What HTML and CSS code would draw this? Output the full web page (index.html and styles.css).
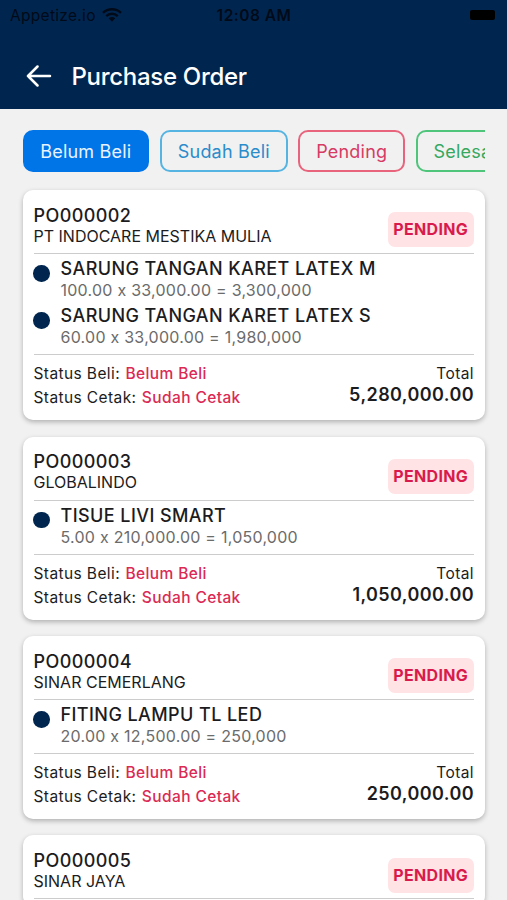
FILE: index.html
```html
<!DOCTYPE html>
<html lang="id">
  <head>
    <meta charset="UTF-8" />
    <meta name="viewport" content="width=device-width, initial-scale=1.0" />
    <title>Purchase Order</title>
    <link rel="stylesheet" href="styles.css">
  </head>
  <body>
    <header>
      <div class="status-bar">
        <div class="carrier">
          <span>Appetize.io</span>
          <svg class="wifi" viewBox="0 0 20 14">
            <path d="M1 4.9 C6 0.1 14 0.1 19 4.9" />
            <path d="M4.2 8.1 C7.6 4.9 12.4 4.9 15.8 8.1" />
            <path class="fill" d="M6.7 10.3 C8.7 8.5 11.3 8.5 13.3 10.3 L10 13.7 Z" />
          </svg>
        </div>
        <span class="time">12:08 AM</span>
        <div class="battery-box"><div class="battery"></div></div>
      </div>
      <div class="nav">
        <svg class="back" viewBox="0 0 26 22">
          <path d="M24 11 H2 M11.5 1.5 L2 11 L11.5 20.5" />
        </svg>
        <h1>Purchase Order</h1>
      </div>
    </header>

    <main>
      <div class="tabs">
        <button type="button" class="tab active">Belum Beli</button>
        <button type="button" class="tab blue">Sudah Beli</button>
        <button type="button" class="tab red">Pending</button>
        <button type="button" class="tab green">Selesai</button>
      </div>

      <div class="card">
        <div class="card-head">
          <div>
            <h2>PO000002</h2>
            <p class="vendor">PT INDOCARE MESTIKA MULIA</p>
          </div>
          <span class="badge">PENDING</span>
        </div>
        <div class="items">
          <div class="item">
            <span class="dot"></span>
            <div>
              <p class="name">SARUNG TANGAN KARET LATEX M</p>
              <p class="detail">100.00 x 33,000.00 = 3,300,000</p>
            </div>
          </div>
          <div class="item">
            <span class="dot"></span>
            <div>
              <p class="name">SARUNG TANGAN KARET LATEX S</p>
              <p class="detail">60.00 x 33,000.00 = 1,980,000</p>
            </div>
          </div>
        </div>
        <div class="card-foot">
          <div class="status">
            <p>Status Beli: <b>Belum Beli</b></p>
            <p>Status Cetak: <b>Sudah Cetak</b></p>
          </div>
          <div class="total">
            <p>Total</p>
            <p class="amount">5,280,000.00</p>
          </div>
        </div>
      </div>

      <div class="card">
        <div class="card-head">
          <div>
            <h2>PO000003</h2>
            <p class="vendor">GLOBALINDO</p>
          </div>
          <span class="badge">PENDING</span>
        </div>
        <div class="items">
          <div class="item">
            <span class="dot"></span>
            <div>
              <p class="name">TISUE LIVI SMART</p>
              <p class="detail">5.00 x 210,000.00 = 1,050,000</p>
            </div>
          </div>
        </div>
        <div class="card-foot">
          <div class="status">
            <p>Status Beli: <b>Belum Beli</b></p>
            <p>Status Cetak: <b>Sudah Cetak</b></p>
          </div>
          <div class="total">
            <p>Total</p>
            <p class="amount">1,050,000.00</p>
          </div>
        </div>
      </div>

      <div class="card">
        <div class="card-head">
          <div>
            <h2>PO000004</h2>
            <p class="vendor">SINAR CEMERLANG</p>
          </div>
          <span class="badge">PENDING</span>
        </div>
        <div class="items">
          <div class="item">
            <span class="dot"></span>
            <div>
              <p class="name">FITING LAMPU TL LED</p>
              <p class="detail">20.00 x 12,500.00 = 250,000</p>
            </div>
          </div>
        </div>
        <div class="card-foot">
          <div class="status">
            <p>Status Beli: <b>Belum Beli</b></p>
            <p>Status Cetak: <b>Sudah Cetak</b></p>
          </div>
          <div class="total">
            <p>Total</p>
            <p class="amount">250,000.00</p>
          </div>
        </div>
      </div>

      <div class="card">
        <div class="card-head">
          <div>
            <h2>PO000005</h2>
            <p class="vendor">SINAR JAYA</p>
          </div>
          <span class="badge">PENDING</span>
        </div>
        <div class="items"></div>
      </div>
    </main>
  </body>
</html>
```
FILE: styles.css
```css
* {
  box-sizing: border-box;
  margin: 0;
  padding: 0;
}

body {
  height: 900px;
  overflow: hidden;
  background: #f1f1f1;
  color: #1c1c1e;
  font-family: Inter, 'Liberation Sans', sans-serif;
  font-feature-settings: 'calt' 0;
}

header {
  height: 108.5px;
  background: #00264f;
}

.status-bar {
  display: grid;
  grid-template-columns: 1fr auto 1fr;
  align-items: center;
  height: 30px;
  padding: 0 12px 0 10px;
  font-size: 15.5px;
  color: #000a18;
}

.carrier {
  display: flex;
  align-items: center;
  gap: 6px;
  letter-spacing: 0.3px;
}

.wifi {
  width: 20px;
  height: 14px;
  fill: none;
  stroke: #000a18;
  stroke-width: 2.4;
}

.wifi .fill {
  fill: #000a18;
  stroke: none;
}

.time {
  padding-left: 3px;
  font-weight: 600;
  letter-spacing: 0.5px;
}

.battery-box {
  display: flex;
  justify-content: flex-end;
}

.battery {
  width: 25px;
  height: 10px;
  border-radius: 2px;
  background: #000;
}

.nav {
  display: flex;
  align-items: center;
  gap: 20px;
  height: 78px;
  padding: 14px 26px 0 25.5px;
}

.back {
  width: 26px;
  height: 22px;
  fill: none;
  stroke: #fff;
  stroke-width: 2.5;
  stroke-linecap: round;
  stroke-linejoin: round;
}

h1 {
  font-size: 24px;
  font-weight: 500;
  letter-spacing: -0.3px;
  color: #fff;
}

main {
  padding: 21.7px 22px 0 22.5px;
}

.tabs {
  display: flex;
  gap: 10.8px;
  margin-bottom: 18px;
  overflow: hidden;
}

.tab {
  flex-shrink: 0;
  height: 42px;
  padding: 0 15.8px;
  border: 2px solid;
  border-radius: 10px;
  background: transparent;
  font-family: inherit;
  font-size: 18px;
  letter-spacing: 0.2px;
}

.active {
  border-color: #0075e8;
  background: #0075e8;
  color: #e8f3ff;
}

.blue {
  border-color: #56b4e2;
  color: #2a8ccb;
}

.red {
  border-color: #e8647d;
  color: #d73a63;
}

.green {
  border-color: #4fc47b;
  color: #36a860;
}

.card {
  margin-bottom: 16.4px;
  padding: 0 11px;
  border-radius: 10px;
  background: #fff;
  box-shadow: 0 2px 5px rgba(0, 0, 0, 0.27);
}

.card-head {
  display: flex;
  justify-content: space-between;
  align-items: flex-end;
  height: 64px;
  padding-bottom: 8.6px;
  border-bottom: 1px solid #ccc;
}

h2 {
  font-size: 18px;
  font-weight: 500;
  line-height: 22px;
  letter-spacing: 0.4px;
}

.vendor {
  font-size: 16px;
  line-height: 18px;
}

.badge {
  width: 86.5px;
  height: 35px;
  margin-bottom: -2.9px;
  border-radius: 7px;
  background: #ffe3e5;
  color: #d81b4c;
  font-size: 16px;
  font-weight: 700;
  line-height: 35px;
  letter-spacing: 0.35px;
  text-align: center;
}

.items {
  padding-bottom: 5.6px;
  border-bottom: 1px solid #ccc;
}

.item {
  display: flex;
  gap: 11px;
  height: 47.2px;
  padding-top: 4px;
}

.dot {
  width: 16.5px;
  height: 16.5px;
  margin-top: 7px;
  margin-left: -0.5px;
  border-radius: 50%;
  background: #00264f;
}

.name {
  font-size: 18px;
  font-weight: 500;
  line-height: 22px;
  letter-spacing: 0.42px;
}

.detail {
  color: #6b6b6b;
  font-size: 16px;
  line-height: 20px;
  letter-spacing: 0.25px;
}

.card-foot {
  display: flex;
  justify-content: space-between;
  height: 65.2px;
  padding-top: 7px;
  font-size: 15.5px;
  line-height: 24.2px;
  letter-spacing: 0.4px;
}

.status b {
  margin-left: 0.6px;
  color: #db2a54;
  font-weight: 500;
  letter-spacing: 0.4px;
}

.total {
  text-align: right;
}

.amount {
  font-size: 18px;
  font-weight: 600;
  line-height: 17px;
}
```
